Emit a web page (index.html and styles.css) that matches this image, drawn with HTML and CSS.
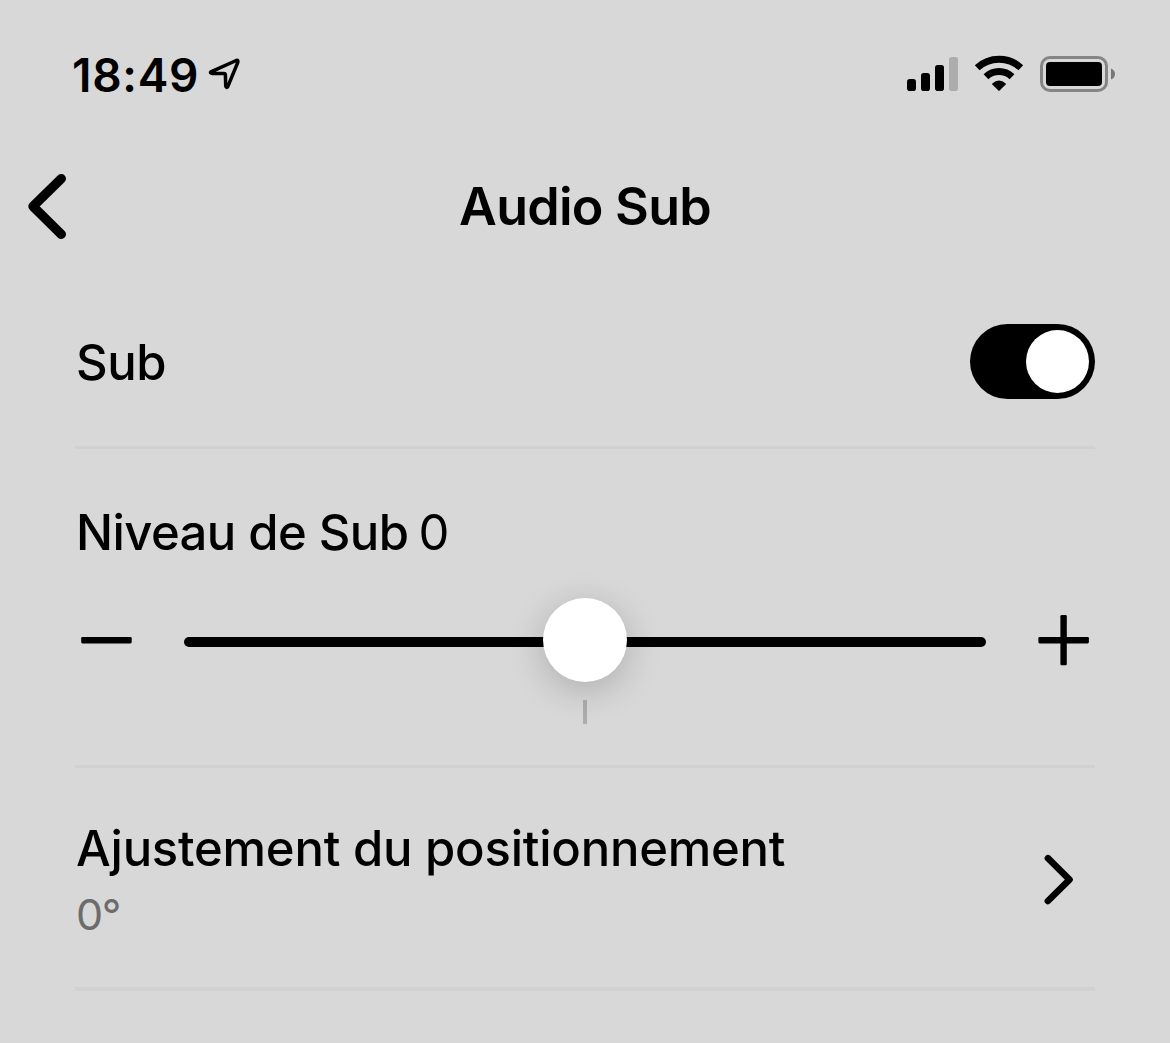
FILE: index.html
```html
<!DOCTYPE html>
<html lang="fr">
<head>
<meta charset="utf-8">
<title>Audio Sub</title>
<link rel="stylesheet" href="styles.css">
</head>
<body>
<div class="status">
  <span class="time">18:49</span>
  <svg class="location" width="34" height="36" viewBox="207 56 34 36"><path d="M210.900 71.800 236.200 60.500Q238.600 59.700 237.800 62.300L228 86.200Q226.300 88.800 225.700 86L225.400 74.700Q225.300 73.400 224 73.400L212 73.400Q209.600 72.900 210.900 71.800Z"/></svg>
  <svg class="indicators" width="212" height="40" viewBox="906 54 212 40">
    <rect x="907" y="79" width="9" height="12" rx="2.800"/>
    <rect x="921" y="73" width="9" height="18" rx="2.800"/>
    <rect x="935" y="65" width="9" height="26" rx="2.800"/>
    <rect class="dim" x="949" y="57" width="9" height="34" rx="2.800"/>
    <path class="arc" d="M977.200 67.700A32 32 0 0 1 1020.800 67.700M986 76.700A19 19 0 0 1 1012 76.700"/>
    <path d="M992.300 83.500Q999 77.500 1005.700 83.500Q1006.200 84 1005.700 84.600L999.600 90.600Q999 91 998.400 90.600L992.300 84.600Q991.800 84 992.300 83.500Z"/>
    <rect class="shell" x="1041.500" y="57.500" width="65" height="33" rx="8.500"/>
    <rect x="1046" y="62" width="56" height="24" rx="4"/>
    <path class="cap" d="M1111 68.500Q1115 70 1115 74T1111 79.500Z"/>
  </svg>
</div>
<header class="header">
  <svg class="back" width="44" height="70" viewBox="25 171 44 70"><path d="M61.300 178.700 33 206.300 61.300 234.300"/></svg>
  <h1 class="title">Audio Sub</h1>
</header>
<main class="settings">
  <section class="row row-sub">
    <span class="label label-sub">Sub</span>
    <span class="toggle"><span class="knob"></span></span>
  </section>
  <section class="level">
    <div class="level-text"><span class="label label-level">Niveau de Sub</span><span class="value">0</span></div>
    <div class="control">
      <svg class="minus" width="52" height="52" viewBox="0 0 52 52"><rect x="0.200" y="23" width="50.500" height="6.400" rx="1.300"/></svg>
      <div class="track"><span class="thumb"></span></div>
      <svg class="plus" width="52" height="52" viewBox="0 0 52 52"><rect x="0.400" y="23" width="50.500" height="6.400" rx="1.300"/><rect x="22.400" y="1" width="6.400" height="50.300" rx="1.300"/></svg>
    </div>
    <div class="tick"></div>
  </section>
  <section class="row row-position">
    <div class="position-text">
      <span class="label label-position">Ajustement du positionnement</span>
      <span class="degrees">0°</span>
    </div>
    <svg class="next" width="36" height="54" viewBox="1041 853 36 54"><path d="M1047.900 858.200 1069.500 879.600 1047.900 901"/></svg>
  </section>
</main>
</body>
</html>
```
FILE: styles.css
```css
* { box-sizing: border-box; }
body {
  margin: 0;
  height: 1043px;
  overflow: hidden;
  background: #d8d8d8;
  color: #000;
  font-family: Inter, "Liberation Sans", sans-serif;
}
svg { display: block; flex: none; }
.status { display: flex; align-items: center; height: 148px; padding: 0 52px 0 72px; }
.time { width: 135px; padding-top: 2px; font-size: 46px; font-weight: 600; line-height: 60px; letter-spacing: 0.7px; white-space: nowrap; }
.location { fill: none; stroke: #000; stroke-width: 3.500; stroke-linejoin: round; }
.indicators { margin-left: auto; }
.dim { fill: #adadad; }
.arc { fill: none; stroke: #000; stroke-width: 7; }
.shell { fill: none; stroke: #858585; stroke-width: 3; }
.cap { fill: #777; }
.header {
  display: grid;
  grid-template-columns: 44px 1fr 44px;
  align-items: center;
  height: 116px;
  padding: 0 25px;
}
.back path { fill: none; stroke: #000; stroke-width: 9.400; stroke-linecap: round; stroke-linejoin: round; }
.title { margin: 0; padding-top: 2px; font-size: 52px; font-weight: 600; line-height: 64px; letter-spacing: -0.75px; text-align: center; white-space: nowrap; }
.settings { padding: 13px 75px 0; }
.row { display: flex; justify-content: space-between; align-items: center; border-bottom: 3px solid #d1d1d1; }
.row-sub { height: 172px; }
.label { padding-left: 1px; font-size: 49px; font-weight: 500; line-height: 64px; white-space: nowrap; }
.label-sub { padding-top: 2px; letter-spacing: -0.4px; }
.label-level { letter-spacing: -0.57px; }
.label-position { letter-spacing: -0.23px; }
.toggle { display: flex; justify-content: flex-end; align-items: center; width: 125px; height: 75px; padding: 0 6px; border-radius: 38px; background: #000; }
.knob { width: 63px; height: 63px; border-radius: 50%; background: #fff; }
.level { height: 319px; padding-top: 52px; border-bottom: 3px solid #d1d1d1; }
.level-text { display: flex; height: 64px; }
.value { margin-left: 10px; font-size: 49px; line-height: 64px; }
.control { display: flex; align-items: center; height: 84px; margin-top: 33px; padding: 0 5px 0 6px; }
.track { display: flex; justify-content: center; align-items: center; width: 802px; height: 10px; margin: 4px 52px 0 51px; border-radius: 5px; background: #000; }
.thumb { flex: none; width: 84px; height: 84px; margin-bottom: 4px; border-radius: 50%; background: #fff; box-shadow: 0 8px 36px rgba(0, 0, 0, 0.2); }
.tick { width: 4px; height: 24px; margin: 18px auto 0; background: #adadad; }
.row-position { height: 223px; border-bottom-width: 4px; }
.position-text { display: flex; flex-direction: column; height: 121px; }
.degrees { padding-left: 1px; font-size: 43px; line-height: 66px; letter-spacing: -1.5px; color: #6c6c6c; }
.next { margin: 4px 18px 0 0; }
.next path { fill: none; stroke: #000; stroke-width: 6.600; stroke-linecap: round; stroke-linejoin: round; }
```
